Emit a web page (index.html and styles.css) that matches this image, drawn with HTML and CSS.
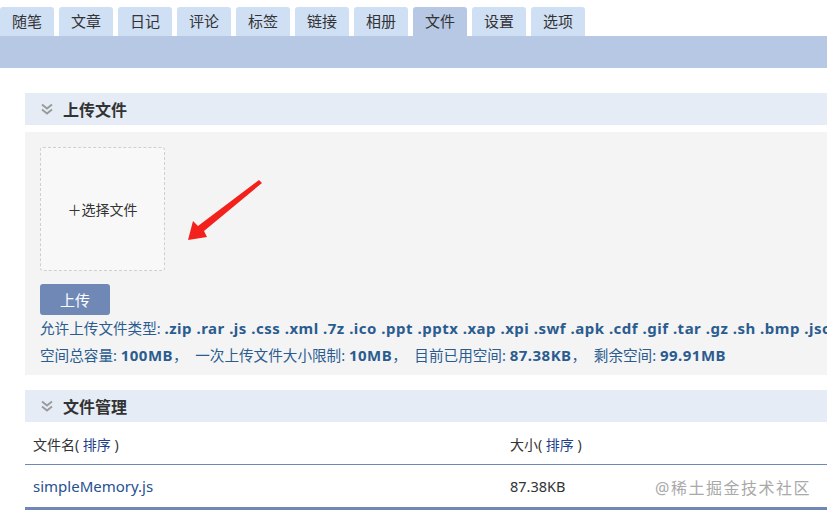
FILE: index.html
```html
<!DOCTYPE html>
<html lang="zh-CN">
<head>
    <meta charset="UTF-8">
    <title>文件</title>
    <link rel="stylesheet" href="styles.css">
</head>
<body>
    <div class="tabs">
        <a class="tab">随笔</a>
        <a class="tab">文章</a>
        <a class="tab">日记</a>
        <a class="tab">评论</a>
        <a class="tab">标签</a>
        <a class="tab">链接</a>
        <a class="tab">相册</a>
        <a class="tab active">文件</a>
        <a class="tab">设置</a>
        <a class="tab">选项</a>
    </div>
    <div class="subbar"></div>

    <div class="main">
        <div class="section-head">
            <svg class="chevron" width="12" height="12" viewBox="0 0 12 12">
                <polyline points="1,1.5 6,5.5 11,1.5" fill="none" stroke="#999" stroke-width="1.8"/>
                <polyline points="1,6.5 6,10.5 11,6.5" fill="none" stroke="#999" stroke-width="1.8"/>
            </svg>
            <span>上传文件</span>
        </div>

        <div class="upload-panel">
            <div class="pick-box">＋选择文件</div>
            <button class="upload-btn">上传</button>
            <div class="info nowrap">允许上传文件类型: <b>.zip .rar .js .css .xml .7z .ico .ppt .pptx .xap .xpi .swf .apk .cdf .gif .tar .gz .sh .bmp .json .svg</b></div>
            <div class="info">空间总容量: <b>100MB</b>，&nbsp; 一次上传文件大小限制: <b>10MB</b>，&nbsp; 目前已用空间: <b>87.38KB</b>，&nbsp; 剩余空间: <b>99.91MB</b></div>

            <svg class="arrow" width="90" height="70" viewBox="180 176 90 70">
                <polygon points="188,240 193,221 198,226 259,180 262,183 204,231 207,237" fill="#f3211c"/>
            </svg>
        </div>

        <div class="section-head">
            <svg class="chevron" width="12" height="12" viewBox="0 0 12 12">
                <polyline points="1,1.5 6,5.5 11,1.5" fill="none" stroke="#999" stroke-width="1.8"/>
                <polyline points="1,6.5 6,10.5 11,6.5" fill="none" stroke="#999" stroke-width="1.8"/>
            </svg>
            <span>文件管理</span>
        </div>

        <div class="file-table">
            <div class="row head">
                <div>文件名( <a>排序</a> )</div>
                <div>大小( <a>排序</a> )</div>
            </div>
            <div class="row item">
                <div><a class="file-link">simpleMemory.js</a></div>
                <div>87.38KB</div>
                <span class="watermark">@稀土掘金技术社区</span>
            </div>
        </div>
    </div>
</body>
</html>
```

FILE: styles.css
```css
body {
    margin: 0;
    font-family: "Noto Sans", "Noto Sans CJK SC", sans-serif;
    font-size: 14px;
    color: #333;
    background: #fff;
    overflow: hidden;
}

.tabs {
    display: flex;
    gap: 5px;
    padding-top: 7px;
    height: 29px;
}

.tab {
    width: 54px;
    height: 29px;
    line-height: 29px;
    text-align: center;
    background: #cfdff4;
    border-radius: 3px 3px 0 0;
    font-size: 15px;
    color: #333;
}

.tab.active {
    background: #b6c8e4;
}

.subbar {
    height: 32px;
    background: #b6c8e4;
}

.main {
    margin: 25px 0 0 25px;
}

.section-head {
    display: flex;
    align-items: center;
    height: 32px;
    background: #e5ecf6;
    padding-left: 16px;
    font-size: 16px;
    font-weight: bold;
    color: #333;
}

.chevron {
    margin-right: 10px;
}

.upload-panel {
    position: relative;
    margin: 7px 0 15px;
    padding: 15px 0 6px 15px;
    background: #f4f4f5;
    overflow: hidden;
}

.pick-box {
    width: 123px;
    height: 122px;
    display: flex;
    align-items: center;
    justify-content: center;
    border: 1px dashed #cfcfcf;
    border-radius: 3px;
    background: #f8f8f8;
    color: #333;
    font-size: 14px;
}

.upload-btn {
    display: block;
    width: 70px;
    height: 31px;
    margin-top: 13px;
    border: none;
    border-radius: 3px;
    background: #6f88b6;
    color: #fff;
    font-family: inherit;
    font-size: 15px;
}

.info {
    color: #2b5c8f;
    font-size: 14.6px;
    line-height: 27px;
}

.info b {
    font-size: 15px;
    font-weight: bold;
    letter-spacing: 0.5px;
}

.nowrap {
    white-space: nowrap;
}

.arrow {
    position: absolute;
    left: 155px;
    top: 44px;
}

.file-table {
    margin-top: 1px;
}

.row {
    position: relative;
    display: grid;
    grid-template-columns: 477px 1fr;
    padding-left: 8px;
    align-items: center;
}

.row.head {
    height: 41px;
    border-bottom: 1px solid #6f88b6;
}

.row.head a {
    color: #1f3f8a;
}

.row.item {
    height: 42px;
    border-bottom: 3px solid #6f88b6;
    font-size: 14.5px;
}

.file-link {
    color: #27508f;
    font-size: 15px;
}

.watermark {
    position: absolute;
    left: 630px;
    top: 10px;
    font-size: 16px;
    color: #a9a9a9;
    letter-spacing: 1.5px;
}
```
